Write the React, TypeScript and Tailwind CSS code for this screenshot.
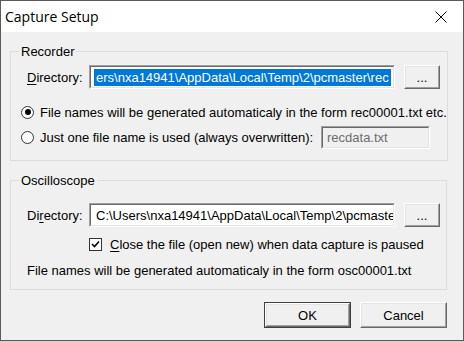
const FONT = "font-['Liberation_Sans',Arial,sans-serif] text-[13px] leading-[15px] text-black"

function Sunken({ children, className = '', disabled = false }: { children: React.ReactNode; className?: string; disabled?: boolean }) {
  return (
    <div className={`border border-t-[#a0a0a0] border-l-[#a0a0a0] border-b-white border-r-white ${className}`}>
      <div
        className={`h-full border border-t-[#696969] border-l-[#696969] border-b-[#e3e3e3] border-r-[#e3e3e3] ${
          disabled ? 'bg-[#f0f0f0]' : 'bg-white'
        } flex items-center overflow-hidden whitespace-nowrap pl-[3px]`}
      >
        {children}
      </div>
    </div>
  )
}

function Raised({ children, className = '', isDefault = false }: { children: React.ReactNode; className?: string; isDefault?: boolean }) {
  const inner = (
    <div className="h-full border border-t-white border-l-white border-b-[#696969] border-r-[#696969]">
      <div className="flex h-full items-center justify-center border border-t-[#e3e3e3] border-l-[#e3e3e3] border-b-[#a0a0a0] border-r-[#a0a0a0] bg-[#f0f0f0]">
        {children}
      </div>
    </div>
  )
  if (isDefault) {
    return <div className={`border border-[#404040] ${className}`}>{inner}</div>
  }
  return <div className={className}>{inner}</div>
}

function Radio({ checked }: { checked: boolean }) {
  return (
    <div className="flex h-[13px] w-[13px] shrink-0 items-center justify-center rounded-full border border-[#333333] bg-white">
      {checked && <div className="h-[6px] w-[6px] rounded-full bg-black" />}
    </div>
  )
}

function Checkbox() {
  return (
    <div className="flex h-[13px] w-[13px] shrink-0 items-center justify-center border border-[#333333] bg-white">
      <svg width="9" height="9" viewBox="0 0 9 9">
        <path d="M1 4 L3.5 6.5 L8 1.5" fill="none" stroke="#000" strokeWidth="1.6" />
      </svg>
    </div>
  )
}

function Group({ title, children, className = '' }: { title: string; children: React.ReactNode; className?: string }) {
  return (
    <fieldset className={`border border-[#dcdcdc] ${className}`}>
      <legend className="-ml-[8px] px-[2px] leading-[15px]">{title}</legend>
      {children}
    </fieldset>
  )
}

export default function App() {
  return (
    <div className={`flex h-[341px] w-[464px] flex-col overflow-hidden border border-[#5a5a5a] bg-[#f0f0f0] ${FONT}`}>
      {/* Title bar */}
      <div className="flex h-[31px] shrink-0 items-center justify-between bg-white pl-[4px] pr-[16px]">
        <span className="font-['Open_Sans',sans-serif] text-[14px] leading-[20px]">Capture Setup</span>
        <svg width="12" height="12" viewBox="0 0 12 12">
          <path d="M0.5 0.5 L11.5 11.5 M11.5 0.5 L0.5 11.5" stroke="#000" strokeWidth="1" />
        </svg>
      </div>

      <div className="flex flex-col pl-[9px] pr-[16px]">
        <Group title="Recorder" className="mt-[12px] pb-[11px] pl-[16px]">
          <div className="mt-[6px] flex h-[24px] items-center">
            <span className="w-[62px]">
              <span className="underline underline-offset-[2px]">D</span>irectory:
            </span>
            <Sunken className="h-[24px] w-[306px]">
              <span className="bg-[#0078d7] px-[2px] leading-[17px] text-white">ers\nxa14941\AppData\Local\Temp\2\pcmaster\rec</span>
            </Sunken>
            <Raised className="ml-[9px] h-[24px] w-[36px]">...</Raised>
          </div>
          <div className="-ml-[6px] mt-[13px] flex h-[20px] items-center gap-[6px] whitespace-nowrap">
            <Radio checked />
            <span>File names will be generated automaticaly in the form rec00001.txt etc.</span>
          </div>
          <div className="-ml-[6px] mt-[4px] flex h-[23px] items-center whitespace-nowrap">
            <Radio checked={false} />
            <span className="ml-[6px] w-[281px]">Just one file name is used (always overwritten):</span>
            <Sunken disabled className="h-[23px] w-[109px]">
              <span className="pl-[1px] text-[#6d6d6d]">recdata.txt</span>
            </Sunken>
          </div>
        </Group>

        <Group title="Oscilloscope" className="mt-[12px] pb-[9px] pl-[16px]">
          <div className="mt-[15px] flex h-[24px] items-center">
            <span className="w-[62px]">
              Di<span className="underline underline-offset-[2px]">r</span>ectory:
            </span>
            <Sunken className="h-[24px] w-[306px]">
              <span className="pl-[2px]">C:\Users\nxa14941\AppData\Local\Temp\2\pcmaste</span>
            </Sunken>
            <Raised className="ml-[9px] h-[24px] w-[36px]">...</Raised>
          </div>
          <div className="ml-[62px] mt-[7px] flex h-[20px] items-center gap-[8px] whitespace-nowrap">
            <Checkbox />
            <span>
              <span className="underline underline-offset-[2px]">C</span>lose the file (open new) when data capture is paused
            </span>
          </div>
          <div className="mt-[6px] flex h-[20px] items-center whitespace-nowrap">
            File names will be generated automaticaly in the form osc00001.txt
          </div>
        </Group>

        <div className="mt-[12px] flex justify-end gap-[9px]">
          <Raised isDefault className="h-[26px] w-[87px]">OK</Raised>
          <Raised className="h-[26px] w-[87px]">Cancel</Raised>
        </div>
      </div>
    </div>
  )
}
